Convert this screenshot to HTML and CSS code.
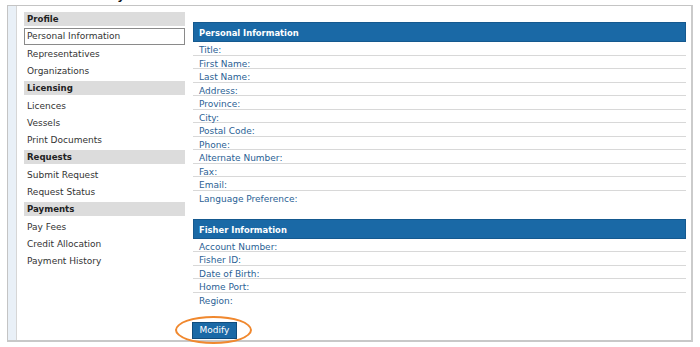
FILE: index.html
```html
<!DOCTYPE html>
<html>
<head>
<meta charset="utf-8">
<link rel="stylesheet" href="styles.css">
</head>
<body>
<div class="page-title"><span>Account Summary</span></div>
<div class="frame">
  <div class="strip"></div>
  <nav class="sidebar">
    <div class="sec-head">Profile</div>
    <div class="item selected">Personal Information</div>
    <div class="item">Representatives</div>
    <div class="item">Organizations</div>
    <div class="sec-head">Licensing</div>
    <div class="item">Licences</div>
    <div class="item">Vessels</div>
    <div class="item">Print Documents</div>
    <div class="sec-head">Requests</div>
    <div class="item">Submit Request</div>
    <div class="item">Request Status</div>
    <div class="sec-head">Payments</div>
    <div class="item">Pay Fees</div>
    <div class="item">Credit Allocation</div>
    <div class="item">Payment History</div>
  </nav>
  <main class="main">
    <section class="panel">
      <div class="panel-head">Personal Information</div>
      <div class="row">Title:</div>
      <div class="row">First Name:</div>
      <div class="row">Last Name:</div>
      <div class="row">Address:</div>
      <div class="row">Province:</div>
      <div class="row">City:</div>
      <div class="row">Postal Code:</div>
      <div class="row">Phone:</div>
      <div class="row">Alternate Number:</div>
      <div class="row">Fax:</div>
      <div class="row">Email:</div>
      <div class="row">Language Preference:</div>
    </section>
    <section class="panel panel-fisher">
      <div class="panel-head">Fisher Information</div>
      <div class="row">Account Number:</div>
      <div class="row">Fisher ID:</div>
      <div class="row">Date of Birth:</div>
      <div class="row">Home Port:</div>
      <div class="row">Region:</div>
    </section>
    <div class="actions">
      <button class="btn">Modify</button>
      <span class="highlight"></span>
    </div>
  </main>
</div>
</body>
</html>
```
FILE: styles.css
```css
html, body {
  margin: 0;
  padding: 0;
  background: #ffffff;
}
body {
  font-family: "DejaVu Sans", Verdana, sans-serif;
  font-size: 9px;
  width: 700px;
  height: 347px;
  overflow: hidden;
}
.page-title {
  height: 5px;
  overflow: hidden;
  margin-left: 10px;
  font-family: "Liberation Sans", Arial, sans-serif;
  font-weight: bold;
  font-size: 13px;
  line-height: 13px;
  color: #111;
}
.page-title span {
  display: block;
  margin-top: -12px;
}
.frame {
  box-sizing: border-box;
  margin-left: 7px;
  width: 686px;
  height: 337px;
  border: 1px solid #c4c4c4;
  border-right-width: 2px;
  border-bottom-width: 2px;
  border-right-color: #cbcbcb;
  border-bottom-color: #c8c8c8;
  display: flex;
  align-items: stretch;
}
.strip {
  width: 8px;
  background: #e9f0f7;
  border-right: 1px solid #d6d6d6;
  flex: none;
}
.sidebar {
  width: 161px;
  margin-left: 7px;
  padding-top: 6px;
  flex: none;
}
.sec-head {
  box-sizing: border-box;
  height: 14px;
  line-height: 13px;
  padding-top: 1px;
  background: #dcdcdc;
  font-weight: bold;
  font-size: 8.6px;
  color: #222;
  padding-left: 3px;
  margin-bottom: 2px;
}
.item + .sec-head {
  margin-top: 2px;
}
.item {
  box-sizing: border-box;
  height: 17px;
  line-height: 16px;
  padding-top: 1px;
  padding-left: 3px;
  color: #333;
  white-space: nowrap;
}
.item.selected {
  border: 1px solid #8a8a8a;
  line-height: 15px;
  padding-top: 0;
  padding-left: 2px;
}
.main {
  width: 493px;
  margin-left: 8px;
  padding-top: 16px;
  flex: none;
}
.panel-head {
  box-sizing: border-box;
  height: 20px;
  line-height: 18px;
  padding-top: 1px;
  background: #1a69a6;
  border: 1px solid #15598f;
  color: #ffffff;
  font-weight: bold;
  font-size: 8.4px;
  padding-left: 5px;
}
.row {
  box-sizing: border-box;
  height: 13.55px;
  line-height: 12px;
  padding-top: 2px;
  padding-left: 6px;
  color: #2b5f95;
  border-bottom: 1px solid #d8d8d8;
  white-space: nowrap;
}
.row:last-child {
  border-bottom: none;
}
.panel-fisher {
  margin-top: 14px;
}
.actions {
  position: relative;
  margin-top: 16px;
  margin-left: -1px;
  display: flex;
}
.btn {
  box-sizing: border-box;
  width: 45px;
  height: 17px;
  padding: 0;
  margin: 0;
  background: #1a69a6;
  border: 1px solid #0f4c7c;
  color: #ffffff;
  font-family: "DejaVu Sans", Verdana, sans-serif;
  font-size: 9px;
  line-height: 15px;
}
.highlight {
  position: absolute;
  left: -17px;
  top: -6px;
  width: 73px;
  height: 24px;
  border: 2px solid #f0882e;
  border-radius: 50%;
  pointer-events: none;
}
```
